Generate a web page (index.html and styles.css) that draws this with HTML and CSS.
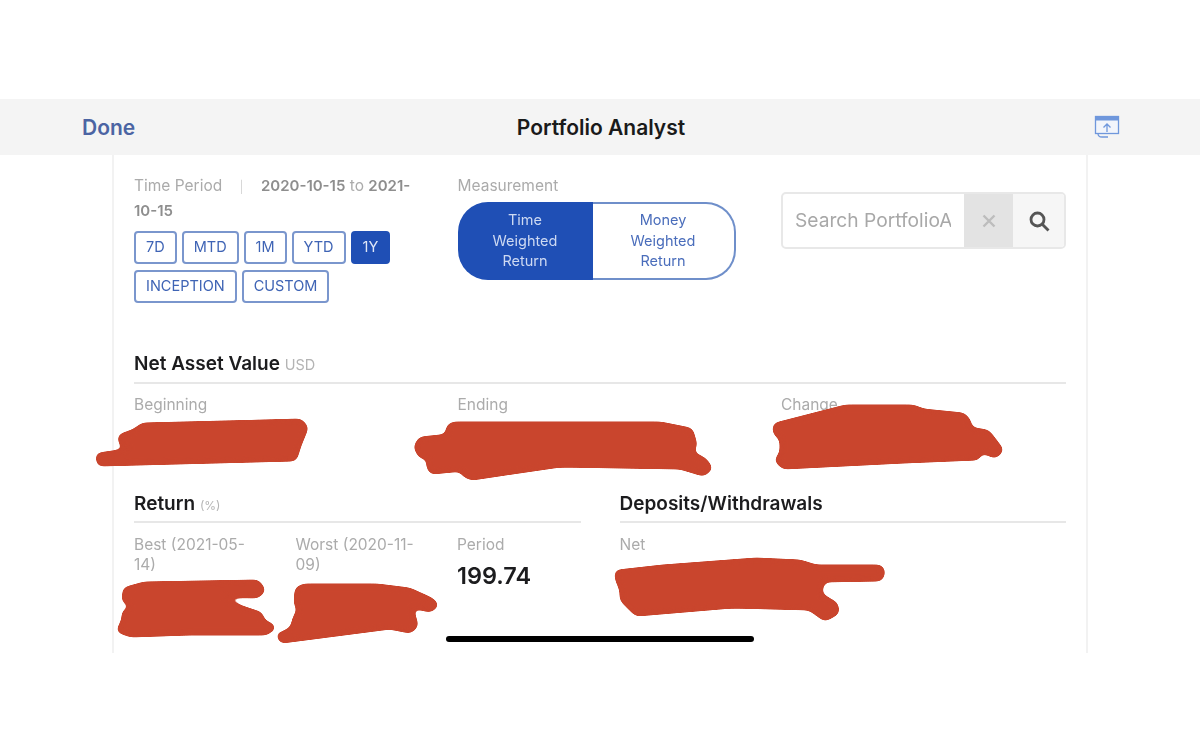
FILE: index.html
```html
<!DOCTYPE html>
<html lang="en">
<head>
  <meta charset="UTF-8">
  <title>Portfolio Analyst</title>
  <link rel="stylesheet" href="styles.css">
</head>
<body>

  <div class="screen">
    <div class="navbar">
      <a class="done">Done</a>
      <div class="title">Portfolio Analyst</div>
      <div class="share">
        <svg width="26" height="24" viewBox="0 0 26 24" fill="none" stroke="#6f97dc" stroke-width="1.3">
          <rect x="1.5" y="1.5" width="23" height="17" fill="#f2f5fb"/>
          <rect x="1.5" y="1.5" width="23" height="4" fill="#6f97dc" stroke="none"/>
          <path d="M13 17V9M9.5 12.5L13 9l3.5 3.5"/>
          <path d="M4 18.500c0 2.500 2 3.500 4 3.500h6"/>
        </svg>
      </div>
    </div>

    <div class="panel">
      <div class="filters">
        <div class="period">
          <div class="period-text">Time Period <span class="sep">|</span> <b>2020-10-15</b> to <b>2021-</b><br><b>10-15</b></div>
          <div class="ranges">
            <button>7D</button>
            <button>MTD</button>
            <button>1M</button>
            <button>YTD</button>
            <button class="active">1Y</button>
            <button>INCEPTION</button>
            <button>CUSTOM</button>
          </div>
        </div>

        <div class="measurement">
          <div class="label">Measurement</div>
          <div class="toggle">
            <div class="toggle-item on">Time<br>Weighted<br>Return</div>
            <div class="toggle-item">Money<br>Weighted<br>Return</div>
          </div>
        </div>

        <div class="search">
          <div class="search-input">Search PortfolioA</div>
          <div class="search-clear">
            <svg width="14" height="14" viewBox="0 0 14 14" stroke="#bdbdbd" stroke-width="2.4"><path d="M1.500 1.500l11 11M12.500 1.500l-11 11"/></svg>
          </div>
          <div class="search-go">
            <svg width="22" height="22" viewBox="0 0 22 22" fill="none" stroke="#555" stroke-width="2.800"><circle cx="9.500" cy="9.500" r="6.500"/><path d="M14.500 14.500l6 6"/></svg>
          </div>
        </div>
      </div>

      <div class="section nav-section">
        <h2>Net Asset Value <small>USD</small></h2>
        <div class="three">
          <div class="label">Beginning</div>
          <div class="label">Ending</div>
          <div class="label">Change</div>
        </div>
      </div>

      <div class="bottom">
        <div class="section">
          <h2>Return <small class="pct">(%)</small></h2>
          <div class="returns">
            <div class="label">Best (2021-05-14)</div>
            <div class="label">Worst (2020-11-09)</div>
            <div>
              <div class="label">Period</div>
              <div class="value">199.74</div>
            </div>
          </div>
        </div>
        <div class="section">
          <h2>Deposits/Withdrawals</h2>
          <div class="label">Net</div>
        </div>
      </div>

      <div class="home-bar"></div>
    </div>
  </div>

  <!-- hand drawn red scribbles over the private numbers -->
  <svg class="scribbles" width="1200" height="735" viewBox="0 0 1200 735">
    <defs>
      <filter id="marker" color-interpolation-filters="sRGB" x="0" y="0" width="1200" height="735" filterUnits="userSpaceOnUse">
        <feGaussianBlur stdDeviation="3"/>
        <feColorMatrix values="1 0 0 0 0  0 1 0 0 0  0 0 1 0 0  0 0 0 12 -5.500"/>
      </filter>
    </defs>
    <g filter="url(#marker)" fill="#c9452d" stroke="#c9452d" stroke-width="7" stroke-linejoin="round">
      <path d="M143 426L300 422L305 428L298 445L294 458L100 463L99 456L140 450L138 446L122 443L121 437L135 432Z"/>
      <path d="M453 425L660 425L690 431L694 445L688 453L704 461L709 468L703 473L680 466L560 464L472 477L465 474L463 468L432 471L429 464L440 458L421 455L417 447L421 440L450 437L449 428Z"/>
      <path d="M776 426L846 408L913 408L923 412L963 416L968 422L968 430L987 433L1000 450L995 455L978 448L977 457L904 460L784 466L778 460L783 454L783 438L776 432Z"/>
      <path d="M126 590L144 585L257 583L262 590L257 595L215 594L216 598L239 608L260 615L261 622L272 627L266 632L190 632L131 634L120 630L125 620L125 613L140 606L125 600Z"/>
      <path d="M298 590L304 587L377 587L409 591L431 601L435 605L430 609L405 603L412 615L415 625L410 630L390 626L282 640L280 636L293 630L296 618L301 610L297 603Z"/>
      <path d="M618 573L663 568L756 561L800 563L816 568L880 568L882 572L880 578L822 579L818 595L835 605L836 612L825 618L810 607L732 605L637 613L623 599L623 590L618 578Z"/>
    </g>
  </svg>

</body>
</html>
```

FILE: styles.css
```css
body {
  margin: 0;
  background: white;
  font-family: Inter, 'Open Sans', sans-serif;
  color: #1c1c1e;
  overflow: hidden;
}

.screen {
  margin-top: 99px;
  filter: blur(0.4px);
}

.navbar {
  display: grid;
  grid-template-columns: 1fr auto 1fr;
  align-items: center;
  height: 56px;
  padding: 0 80px 0 82px;
  background: #f4f4f4;
}

.done {
  font-size: 21px;
  font-weight: 600;
  color: #4b64a3;
}

.title {
  font-size: 21px;
  font-weight: 600;
  color: #1a1a1a;
}

.share {
  display: flex;
  justify-content: flex-end;
}

.panel {
  position: relative;
  width: 932px;
  height: 498px;
  margin: 0 auto;
  padding: 0 20px;
  border: solid #f2f2f2;
  border-width: 0 2px;
}

.label {
  font-size: 15.500px;
  line-height: 20px;
  color: #ababab;
}

.filters {
  display: grid;
  grid-template-columns: 285px 285px 285px;
  column-gap: 38.500px;
}

.period {
  padding-top: 19px;
}

.period-text {
  font-size: 15.500px;
  line-height: 24px;
  color: #ababab;
}

.period-text b {
  font-weight: 600;
  font-size: 15px;
  color: #8e8e8e;
}

.sep {
  margin: 0 13px;
  color: #d6d6d6;
  font-size: 12px;
}

.ranges {
  display: flex;
  flex-wrap: wrap;
  gap: 6px 5px;
  margin-top: 8px;
}

.ranges button {
  height: 33px;
  padding: 0 10px 2px;
  font-family: inherit;
  font-size: 14.500px;
  color: #3f64b5;
  background: white;
  border: 2px solid #7a96cd;
  border-radius: 4px;
}

.ranges .active {
  color: #dfe7f7;
  background: #1f4fb5;
  border-color: #1f4fb5;
}

.measurement {
  padding-top: 21px;
}

.toggle {
  display: flex;
  width: 278px;
  height: 78px;
  margin-top: 6px;
}

.toggle-item {
  flex: 1;
  display: flex;
  align-items: center;
  justify-content: center;
  box-sizing: border-box;
  font-size: 14.500px;
  line-height: 20.500px;
  text-align: center;
  color: #4a6dbb;
  border: 2px solid #6f8fca;
  border-left: none;
  border-radius: 0 30px 30px 0;
}

.toggle-item.on {
  flex: 0 0 135px;
  color: #cdd9f2;
  background: #1f4fb5;
  border: none;
  border-radius: 30px 0 0 30px;
}

.search {
  display: flex;
  height: 57px;
  margin-top: 37px;
  box-sizing: border-box;
  border: 2px solid #e8e8e8;
  border-radius: 5px;
  overflow: hidden;
}

.search-input {
  flex: 1;
  min-width: 0;
  overflow: hidden;
  margin: 0 13px 0 12px;
  font-size: 19.200px;
  line-height: 53px;
  white-space: nowrap;
  color: #a8a8a8;
}

.search-clear, .search-go {
  display: flex;
  align-items: center;
  justify-content: center;
  flex: none;
}

.search-clear {
  width: 49px;
  background: #e3e3e3;
}

.search-go {
  width: 51px;
  background: #f6f6f6;
}

h2 {
  margin: 0 0 11px;
  padding-bottom: 5px;
  border-bottom: 2px solid #e7e7e7;
  font-size: 19px;
  line-height: 26px;
  font-weight: 600;
  color: #1c1c1e;
}

h2 small {
  line-height: 0;
  font-size: 14.500px;
  font-weight: 400;
  color: #b4b4b4;
}

h2 .pct {
  font-size: 12px;
}

.nav-section {
  margin-top: 48px;
}

.three {
  display: grid;
  grid-template-columns: 285px 285px 285px;
  column-gap: 38.500px;
}

.bottom {
  display: grid;
  grid-template-columns: 446.500px 446.500px;
  column-gap: 39px;
  margin-top: 76px;
}

.bottom h2 {
  margin-bottom: 12px;
  padding-bottom: 4px;
}

.returns {
  display: grid;
  grid-template-columns: 123px 123px 123px;
  column-gap: 38.500px;
}

.value {
  margin-top: 6px;
  font-size: 23.500px;
  line-height: 30px;
  font-weight: 600;
  color: #1c1c1e;
}

.home-bar {
  position: absolute;
  left: 332px;
  top: 481px;
  width: 308px;
  height: 6px;
  border-radius: 3px;
  background: black;
}

.scribbles {
  position: absolute;
  top: 0;
  left: 0;
}
```
